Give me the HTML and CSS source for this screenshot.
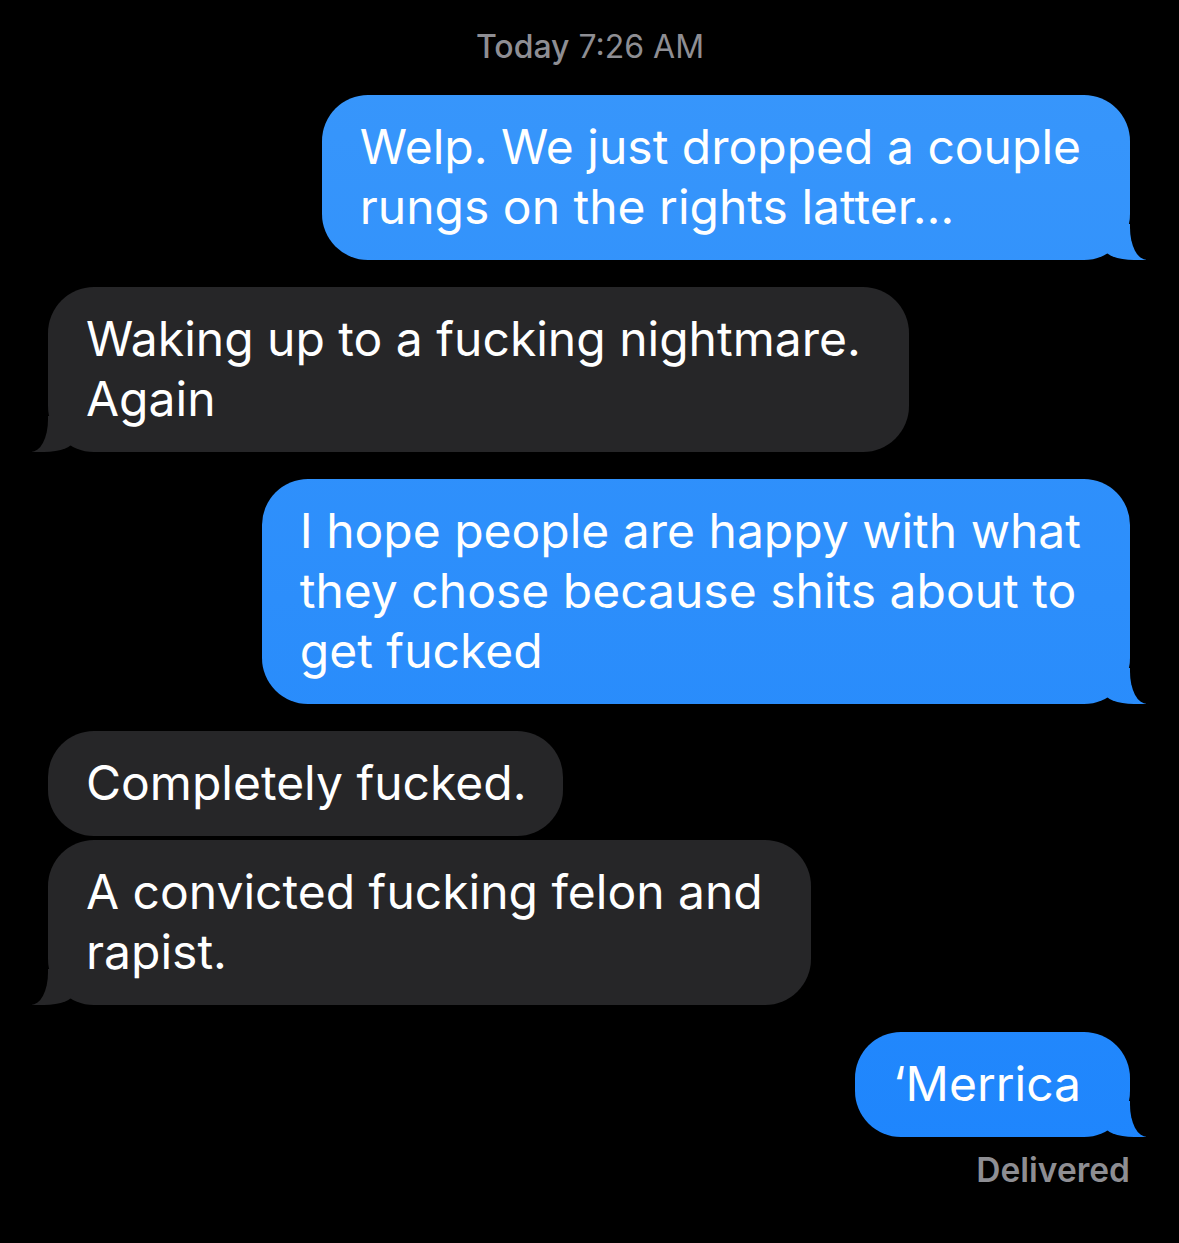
FILE: index.html
```html
<!DOCTYPE html>
<html>
<head>
<meta charset="utf-8">
<link rel="stylesheet" href="styles.css">
</head>
<body>
<div class="thread">
  <div class="stamp"><span class="day">Today</span> 7:26 AM</div>
  <div class="bubble sent tail first">Welp. We just dropped a couple<br>rungs on the rights latter…</div>
  <div class="bubble recv tail wrap">Waking up to a fucking nightmare.<br>Again</div>
  <div class="bubble sent tail">I hope people are happy with what<br>they chose because shits about to<br>get fucked</div>
  <div class="bubble recv">Completely fucked.</div>
  <div class="bubble recv tail grouped wrap">A convicted fucking felon and<br>rapist.</div>
  <div class="bubble sent tail">‘Merrica</div>
  <div class="status">Delivered</div>
</div>
</body>
</html>
```
FILE: styles.css
```css
html, body {
  margin: 0;
  padding: 0;
  background: #000;
}
body {
  font-family: Inter, "Noto Sans", "Liberation Sans", sans-serif;
  -webkit-font-smoothing: antialiased;
}
.thread {
  display: flex;
  flex-direction: column;
  padding: 28px 49px 40px 48px;
}
.stamp {
  align-self: center;
  color: #8e8e93;
  font-size: 32px;
  line-height: 38px;
  font-weight: 400;
  margin-left: 2px;
}
.stamp .day {
  font-weight: 500;
}
.bubble {
  position: relative;
  font-size: 48px;
  line-height: 60px;
  color: #fff;
  padding: 22px 37px 23px 38px;
  border-radius: 46px;
  white-space: nowrap;
  margin-top: 27px;
  letter-spacing: 0;
}
.bubble.first {
  margin-top: 29px;
}
.bubble.grouped {
  margin-top: 4px;
}
.bubble.wrap {
  padding-right: 48px;
}
.sent {
  align-self: flex-end;
  padding-right: 49px;
  background: linear-gradient(180deg, #3997fb 0px, #2c8efb 600px, #1c84fd 1243px);
  background-attachment: fixed;
}
.recv {
  align-self: flex-start;
  background: #262628;
}
.tail::before,
.tail::after {
  content: "";
  position: absolute;
  bottom: 0;
  height: 36px;
}
.sent.tail::before {
  right: -16px;
  width: 42px;
  background: inherit;
  border-bottom-left-radius: 30px 12px;
}
.sent.tail::after {
  right: -36px;
  width: 36px;
  background: #000;
  border-bottom-left-radius: 17px 32px;
}
.recv.tail::before {
  left: -16px;
  width: 42px;
  background: #262628;
  border-bottom-right-radius: 30px 12px;
}
.recv.tail::after {
  left: -36px;
  width: 36px;
  background: #000;
  border-bottom-right-radius: 17px 32px;
}
.status {
  align-self: flex-end;
  color: #8e8e93;
  font-size: 33.5px;
  line-height: 38px;
  font-weight: 600;
  margin-top: 14px;
}
```
